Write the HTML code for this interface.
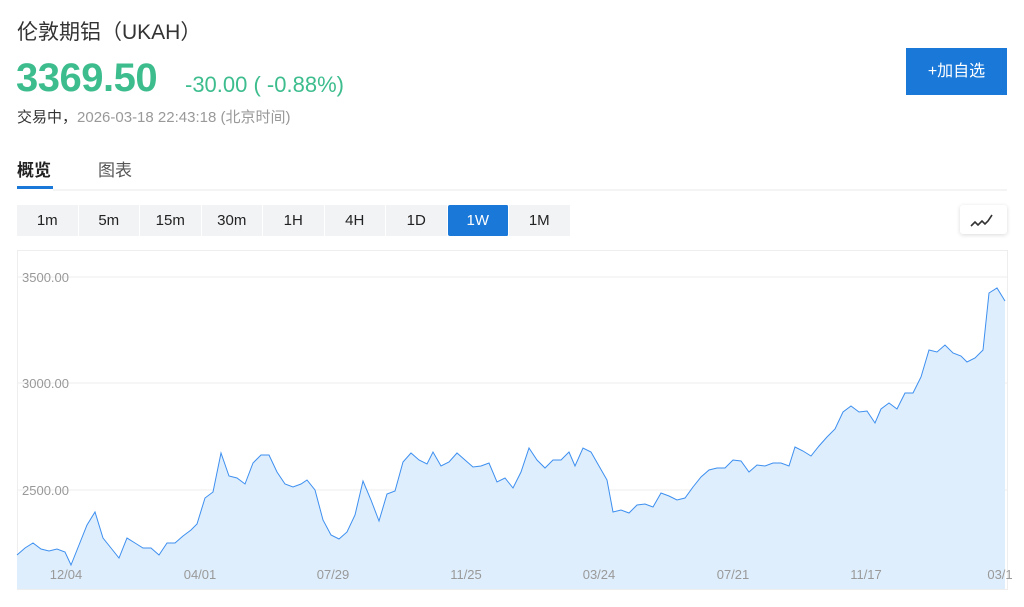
<!DOCTYPE html>
<html><head><meta charset="utf-8"><style>
*{margin:0;padding:0;box-sizing:border-box}
body{width:1024px;height:607px;background:#fff;font-family:"Liberation Sans","Noto Sans CJK SC",sans-serif;position:relative;overflow:hidden;color:#222}
.a{position:absolute;white-space:nowrap}
.tabs{position:absolute;left:17px;top:205px;height:31px;display:flex}
.tabs div{width:61.5px;height:31px;background:#f2f3f5;border-right:1px solid #fff;font-size:15px;line-height:31px;text-align:center;color:#222}
.tabs .on{background:#1a78d8;color:#fff;border-radius:2px}
</style></head><body>
<div class="a" style="left:17px;top:16px;font-size:21px;color:#333">伦敦期铝（UKAH）</div>
<div class="a" style="left:16px;top:56px;font-size:40px;font-weight:bold;color:#3dbd8e;letter-spacing:-0.5px">3369.50</div>
<div class="a" style="left:185px;top:72px;font-size:22px;color:#3dbd8e">-30.00 ( -0.88%)</div>
<div class="a" style="left:17px;top:106px;font-size:15px;color:#333;font-weight:normal">交易中，<span style="color:#999">2026-03-18 22:43:18 (北京时间)</span></div>
<div class="a" style="left:906px;top:48px;width:101px;height:47px;background:#1a78d8;color:#fff;font-size:16px;line-height:47px;text-align:center">+加自选</div>
<div class="a" style="left:17px;top:156px;font-size:17px;font-weight:bold;color:#222">概览</div>
<div class="a" style="left:98px;top:156px;font-size:17px;color:#555">图表</div>
<div class="a" style="left:17px;top:186px;width:36px;height:3px;background:#1a78d8"></div>
<div class="a" style="left:53px;top:189px;width:954px;height:2px;background:#f4f4f4"></div>
<div class="tabs"><div>1m</div><div>5m</div><div>15m</div><div>30m</div><div>1H</div><div>4H</div><div>1D</div><div class="on">1W</div><div>1M</div></div>
<div class="a" style="left:960px;top:205px;width:47px;height:29px;background:#fff;border-radius:3px;box-shadow:0 1px 4px rgba(0,0,0,.15)">
<svg width="47" height="29"><polyline points="11,21 15,17 18,20 22,16 25,19 28,16 32,10" fill="none" stroke="#333" stroke-width="1.6"/></svg></div>
<svg class="a" style="left:0;top:0" width="1024" height="607">
<rect x="17.5" y="250.5" width="990" height="339" fill="none" stroke="#eee"/>
<line x1="17" y1="277" x2="1008" y2="277" stroke="#eee"/>
<line x1="17" y1="383" x2="1008" y2="383" stroke="#eee"/>
<line x1="17" y1="490" x2="1008" y2="490" stroke="#eee"/>
<polygon fill="#dfeefc" points="17,589 17,555 25,548 33,543 41,549 49,551 57,549 65,552 71,565 79,545 87,525 95,512 103,538 111,548 119,558 127,538 135,543 143,548 151,548 159,555 167,543 175,543 183,536 191,530 197,524 205,498 213,492 221,453 229,476 237,478 245,484 253,463 261,455 269,455 277,472 285,484 293,487 301,484 307,480 315,490 323,520 331,535 339,539 347,532 355,515 363,481 371,500 379,521 387,494 395,491 403,462 411,453 419,460 427,464 433,452 441,466 449,462 457,453 465,460 473,467 481,466 489,463 497,482 505,478 513,488 521,472 529,448 537,460 545,468 553,460 561,460 569,452 575,466 583,448 591,452 599,466 607,480 613,512 621,510 629,513 637,505 645,504 653,507 661,493 669,496 677,500 685,498 693,487 701,477 709,470 717,468 725,468 733,460 741,461 749,472 757,465 765,466 773,463 781,463 789,466 795,447 803,451 811,456 819,446 827,437 835,429 843,412 851,406 859,412 867,411 875,423 881,409 889,403 897,409 905,393 913,393 921,377 929,350 937,352 945,345 953,353 961,356 967,362 975,358 983,350 989,293 997,288 1005,301 1005,589"/>
<polyline fill="none" stroke="#3d8ff0" stroke-width="1" points="17,555 25,548 33,543 41,549 49,551 57,549 65,552 71,565 79,545 87,525 95,512 103,538 111,548 119,558 127,538 135,543 143,548 151,548 159,555 167,543 175,543 183,536 191,530 197,524 205,498 213,492 221,453 229,476 237,478 245,484 253,463 261,455 269,455 277,472 285,484 293,487 301,484 307,480 315,490 323,520 331,535 339,539 347,532 355,515 363,481 371,500 379,521 387,494 395,491 403,462 411,453 419,460 427,464 433,452 441,466 449,462 457,453 465,460 473,467 481,466 489,463 497,482 505,478 513,488 521,472 529,448 537,460 545,468 553,460 561,460 569,452 575,466 583,448 591,452 599,466 607,480 613,512 621,510 629,513 637,505 645,504 653,507 661,493 669,496 677,500 685,498 693,487 701,477 709,470 717,468 725,468 733,460 741,461 749,472 757,465 765,466 773,463 781,463 789,466 795,447 803,451 811,456 819,446 827,437 835,429 843,412 851,406 859,412 867,411 875,423 881,409 889,403 897,409 905,393 913,393 921,377 929,350 937,352 945,345 953,353 961,356 967,362 975,358 983,350 989,293 997,288 1005,301"/>
<g font-family="Liberation Sans" font-size="13" fill="#999">
<text x="22" y="282">3500.00</text><text x="22" y="388">3000.00</text><text x="22" y="495">2500.00</text>
<g text-anchor="middle"><text x="66" y="579">12/04</text><text x="200" y="579">04/01</text><text x="333" y="579">07/29</text><text x="466" y="579">11/25</text><text x="599" y="579">03/24</text><text x="733" y="579">07/21</text><text x="866" y="579">11/17</text><text x="1000" y="579">03/1</text></g>
</g></svg>
</body></html>
